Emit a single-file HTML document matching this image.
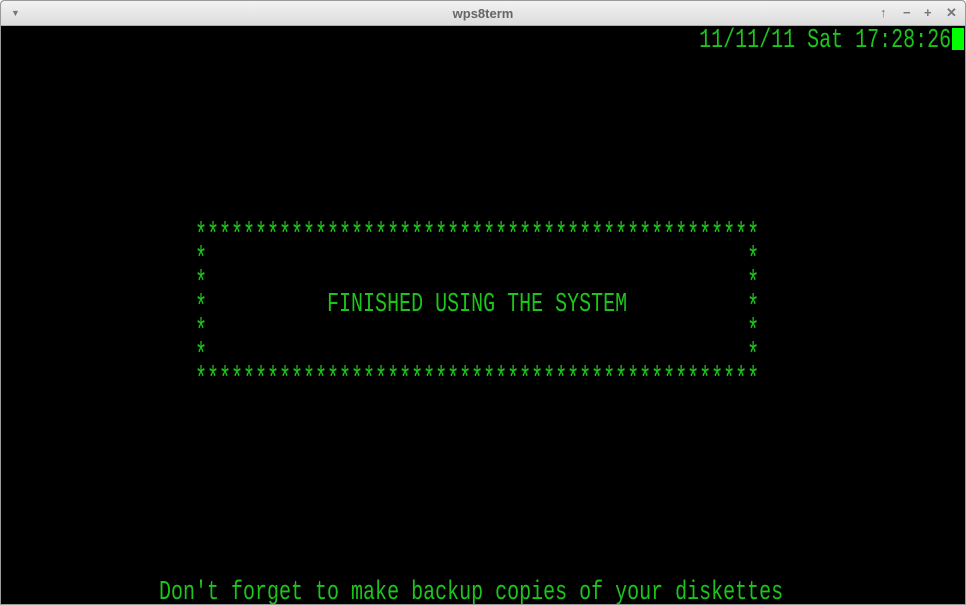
<!DOCTYPE html>
<html><head><style>
html,body{margin:0;padding:0;background:#fff;}
#win{position:absolute;left:0;top:0;width:964px;height:603px;border:1px solid #9a9a9a;border-radius:4px 4px 0 0;overflow:hidden;background:#000;}
#tb{position:absolute;left:0;top:0;width:964px;height:24px;background:linear-gradient(#f2f2f2,#dcdcdc);border-bottom:1px solid #b0b0b0;font-family:"Liberation Sans",sans-serif;}
#title{position:absolute;left:0;width:964px;top:5px;text-align:center;font-size:13px;font-weight:bold;color:#666;}
.b{position:absolute;top:4px;font-size:13px;color:#777;font-weight:bold;}
#term{position:absolute;left:2px;top:25px;width:962px;height:578px;background:#000;}
.l{position:absolute;left:0;height:24px;width:962px;white-space:pre;font-family:"Liberation Mono",monospace;font-size:20px;line-height:24px;color:#1cc41c;}
.l span{display:inline-block;transform:translateY(4px) scaleY(1.35);transform-origin:50% 55%;}
.s span{transform:translateY(9px) scaleY(1.6);}
#cur{position:absolute;left:949px;top:2px;width:12px;height:22px;background:#00ff00;}
</style></head><body>
<div id="win">
<div id="tb"><span class="b" style="left:10px;font-size:9px;top:7px">▼</span><div id="title">wps8term</div>
<span class="b" style="left:879px">↑</span><span class="b" style="left:902px">−</span><span class="b" style="left:923px">+</span><span class="b" style="left:945px">✕</span></div>
<div id="term">
<div class="l" style="top:0"><span>                                                          11/11/11 Sat 17:28:26</span></div>
<div id="cur"></div>
<div class="l s" style="top:192px"><span>                ***********************************************</span></div>
<div class="l s" style="top:216px"><span>                *                                             *</span></div>
<div class="l s" style="top:240px"><span>                *                                             *</span></div>
<div class="l" style="top:264px"><span>                           FINISHED USING THE SYSTEM</span></div>
<div class="l s" style="top:264px"><span>                *                                             *</span></div>
<div class="l s" style="top:288px"><span>                *                                             *</span></div>
<div class="l s" style="top:312px"><span>                *                                             *</span></div>
<div class="l s" style="top:336px"><span>                ***********************************************</span></div>
<div class="l" style="top:552px"><span>             Don't forget to make backup copies of your diskettes</span></div>
</div>
</div>
</body></html>
